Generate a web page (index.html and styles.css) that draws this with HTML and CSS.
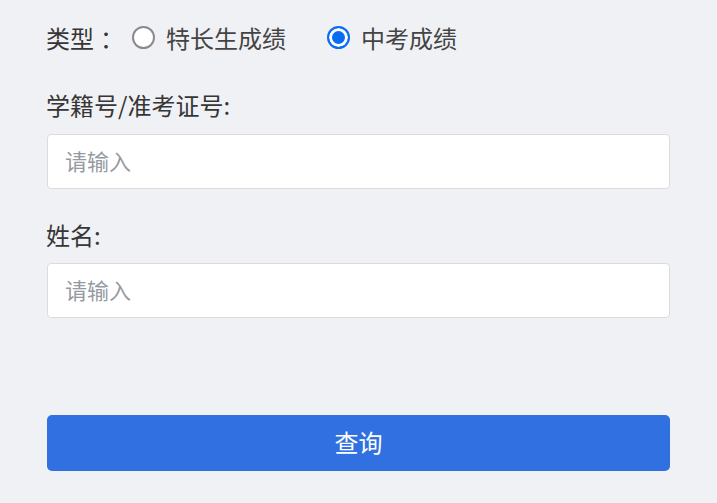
FILE: index.html
```html
<!DOCTYPE html>
<html lang="zh-CN">
<head>
<meta charset="utf-8">
<title>成绩查询</title>
<link rel="stylesheet" href="styles.css">
</head>
<body>
<form class="page">
  <div class="type-row">
    <span class="type-label">类型<span class="colon">：</span></span>
    <label class="radio-opt">
      <input type="radio" name="type" class="radio">
      <span>特长生成绩</span>
    </label>
    <label class="radio-opt radio-opt-second">
      <input type="radio" name="type" class="radio" checked>
      <span>中考成绩</span>
    </label>
  </div>
  <div class="field field-first">
    <div class="field-label">学籍号/准考证号:</div>
    <input class="text-input" type="text" placeholder="请输入">
  </div>
  <div class="field field-second">
    <div class="field-label">姓名:</div>
    <input class="text-input" type="text" placeholder="请输入">
  </div>
  <button type="button" class="submit">查询</button>
</form>
</body>
</html>
```
FILE: styles.css
```css
html, body {
  margin: 0;
  padding: 0;
  background: #f0f1f5;
}
body {
  font-family: "Noto Sans CJK SC", "Noto Sans", sans-serif;
  color: #363636;
}
.page {
  display: flex;
  flex-direction: column;
  padding: 17px 47px 0 46px;
}
.type-row {
  display: flex;
  align-items: center;
  height: 40px;
  font-size: 24px;
}
.type-label {
  margin-right: 8px;
}
.colon {
  margin-left: 6px;
}
.radio-opt {
  display: flex;
  align-items: center;
  gap: 11px;
  cursor: pointer;
  color: #444444;
}
.radio-opt-second {
  margin-left: 41px;
}
.radio {
  -webkit-appearance: none;
  appearance: none;
  margin: 1px 0 0 0;
  width: 23px;
  height: 23px;
  border-radius: 50%;
  border: 2px solid #8a8a8a;
  background: #ffffff;
  box-sizing: border-box;
}
.radio:checked {
  border: 2.5px solid #0a6cf2;
  background: #0a6cf2;
  box-shadow: inset 0 0 0 3px #ffffff;
}
.field {
  display: flex;
  flex-direction: column;
}
.field-first {
  margin-top: 33px;
}
.field-second {
  margin-top: 31px;
}
.field-label {
  font-size: 24px;
  line-height: 30px;
}
.field-first .text-input {
  margin-top: 14px;
}
.field-second .text-input {
  margin-top: 13px;
}
.text-input {
  margin-left: 1px;
  height: 55px;
  box-sizing: border-box;
  border: 1px solid #dcdcdf;
  border-radius: 4px;
  background: #ffffff;
  padding: 0 17px 4px 17px;
  font-family: "Noto Sans CJK SC", "Noto Sans", sans-serif;
  font-size: 22px;
  color: #333333;
  outline: none;
}
.text-input::placeholder {
  color: #969aa0;
}
.submit {
  margin-top: 97px;
  margin-left: 1px;
  height: 56px;
  padding: 0 0 3px 0;
  border: none;
  border-radius: 5px;
  background: #3070e0;
  color: #ffffff;
  font-family: "Noto Sans CJK SC", "Noto Sans", sans-serif;
  font-size: 24px;
  cursor: pointer;
}
```
